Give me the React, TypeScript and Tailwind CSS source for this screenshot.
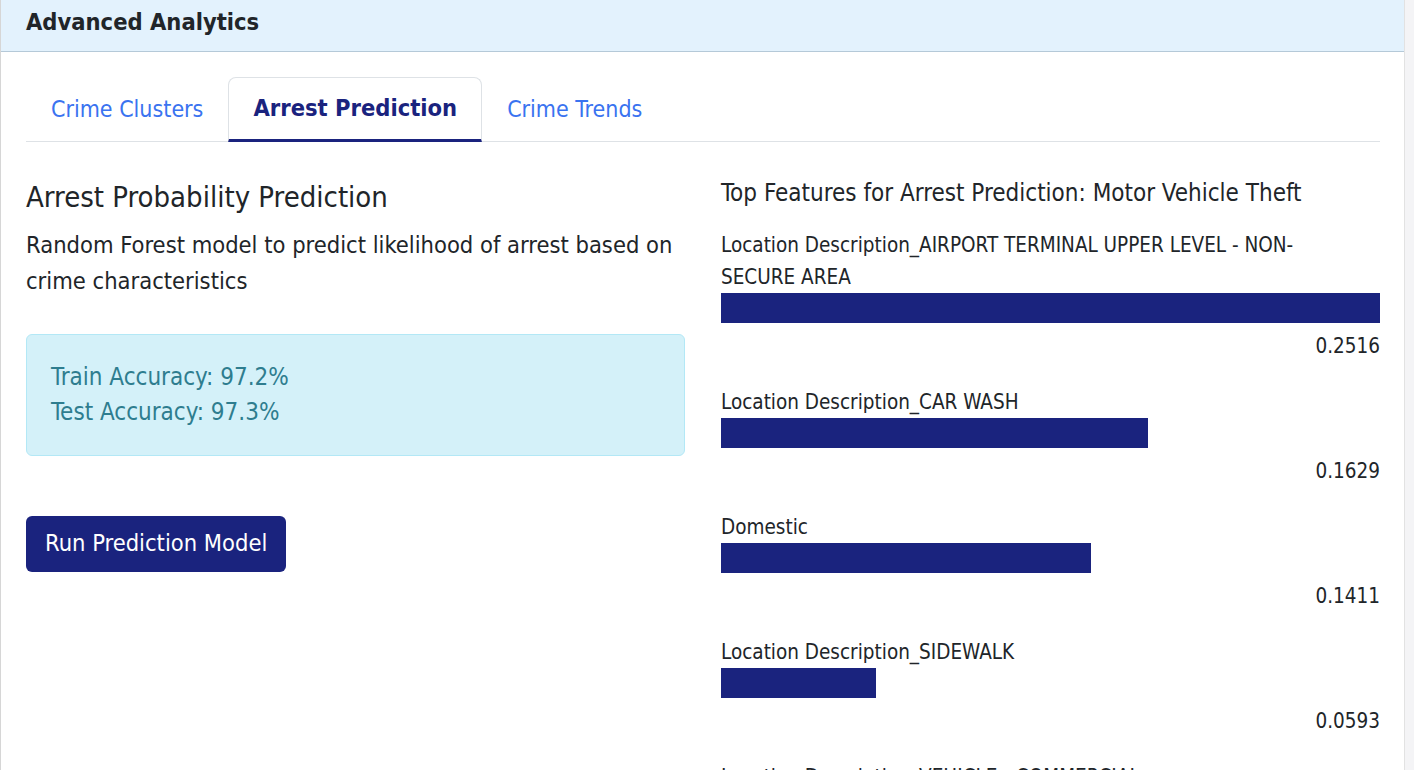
const features = [
  { label: "Location Description_AIRPORT TERMINAL UPPER LEVEL - NON-SECURE AREA", value: 0.2516 },
  { label: "Location Description_CAR WASH", value: 0.1629 },
  { label: "Domestic", value: 0.1411 },
  { label: "Location Description_SIDEWALK", value: 0.0593 },
  { label: "Location Description_VEHICLE - COMMERCIAL", value: 0.0412 },
];

const tabs = ["Crime Clusters", "Arrest Prediction", "Crime Trends"];

export default function App() {
  const max = Math.max(...features.map((f) => f.value));
  return (
    <div className="flex h-[770px] overflow-hidden bg-white font-['DejaVu_Sans_Condensed','Liberation_Sans',sans-serif] text-[#212529]">
      <div className="w-[1404px] shrink-0 border-l border-[#d6d6d6]">
        {/* Header */}
        <div className="h-[52px] flex items-center pb-[6px] px-[25px] bg-[#e3f2fd] border-b border-[#b5c9d8]">
          <h2 className="text-[23.5px] font-bold">Advanced Analytics</h2>
        </div>

        <div className="px-[25px] pt-[25px]">
          {/* Tabs */}
          <div className="flex border-b border-[#dee2e6] w-[1354px]">
            {tabs.map((t) => (
              <div
                key={t}
                className={
                  t === "Arrest Prediction"
                    ? "h-[65px] -mb-px px-[24px] flex items-center text-[23.5px] font-bold text-[#1a237e] border border-[#dee2e6] border-b-[3px] border-b-[#1a237e] rounded-t-lg bg-white"
                    : "h-[64px] px-[25px] flex items-center text-[23px] text-[#3a73f0]"
                }
              >
                {t}
              </div>
            ))}
          </div>

          <div className="grid grid-cols-[659px_659px] gap-[36px] pt-[38px]">
            {/* Left */}
            <div>
              <h3 className="text-[29px] leading-[34px]">Arrest Probability Prediction</h3>
              <p className="mt-[13px] text-[23.5px] leading-[36px]">
                Random Forest model to predict likelihood of arrest based on crime characteristics
              </p>
              <div className="mt-[35px] h-[122px] rounded-md border border-[#b3e8f6] bg-[#d4f1f9] px-[24px] flex flex-col justify-center text-[24px] leading-[35px] text-[#2e7d8f]">
                <div>Train Accuracy: 97.2%</div>
                <div>Test Accuracy: 97.3%</div>
              </div>
              <button className="mt-[60px] h-[56px] px-[19px] rounded-md bg-[#1a237e] text-white text-[23.5px]">
                Run Prediction Model
              </button>
            </div>

            {/* Right */}
            <div>
              <h4 className="text-[24px] leading-[32px] -mt-[3px]">
                Top Features for Arrest Prediction: Motor Vehicle Theft
              </h4>
              <div className="mt-[20px]">
                {features.map((f) => (
                  <div key={f.label} className="mb-[23px]">
                    <div className="max-w-[610px] text-[20.5px] leading-[32px]">{f.label}</div>
                    <div className="h-[30px]">
                      <div
                        className="h-full bg-[#1a237e]"
                        style={{ width: `${(f.value / max) * 100}%` }}
                      />
                    </div>
                    <div className="mt-[7px] text-right text-[20.5px] leading-[33px]">
                      {f.value.toFixed(4)}
                    </div>
                  </div>
                ))}
              </div>
            </div>
          </div>
        </div>
      </div>
      <div className="flex-1 bg-[#f4f4f6] border-l border-[#e2e2e2]" />
    </div>
  );
}
